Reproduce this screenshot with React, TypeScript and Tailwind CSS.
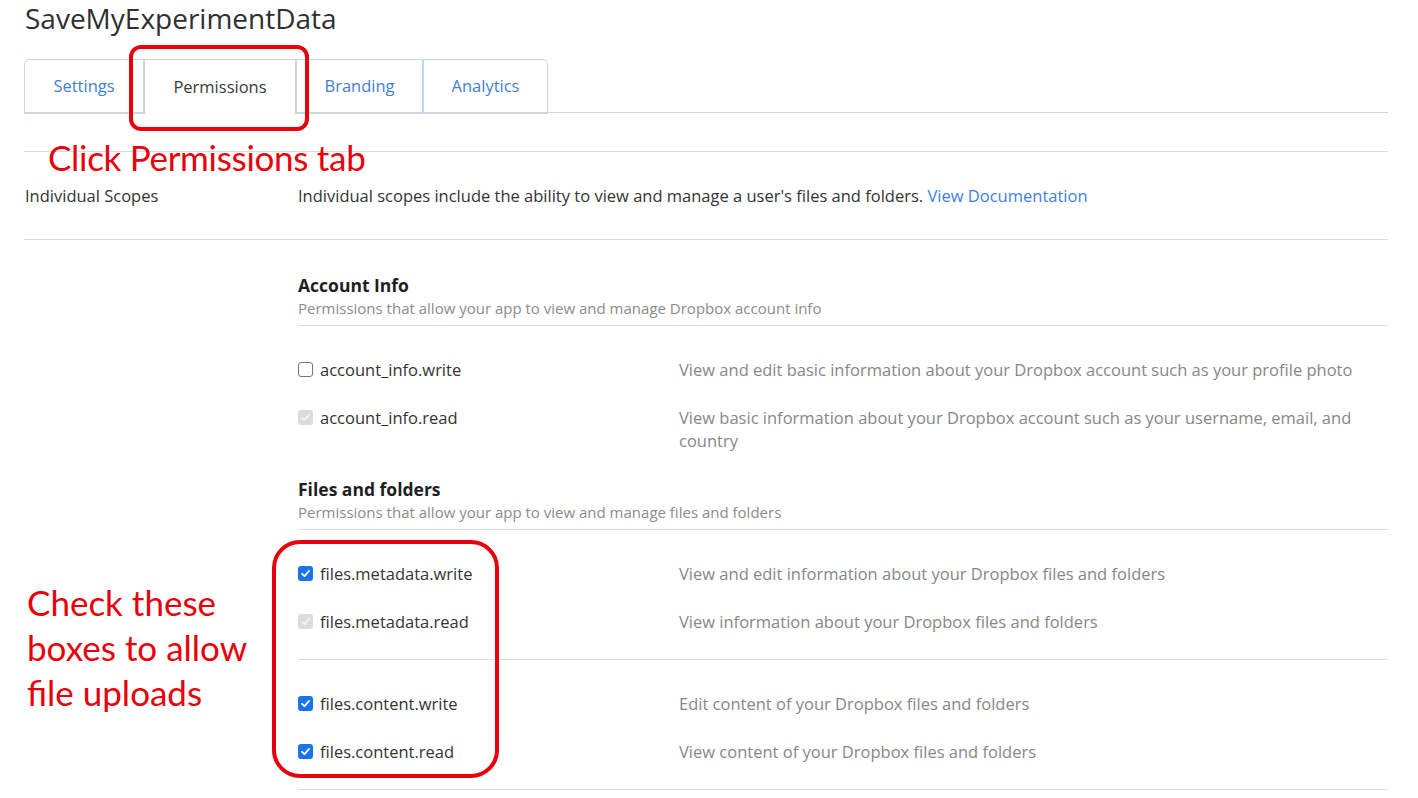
import React from "react";

const RED = "border-[#e8000b]";

type Scope = {
  name: string;
  desc: string;
  state: "off" | "on" | "locked";
};

const ACCOUNT_SCOPES: Scope[] = [
  {
    name: "account_info.write",
    desc: "View and edit basic information about your Dropbox account such as your profile photo",
    state: "off",
  },
  {
    name: "account_info.read",
    desc: "View basic information about your Dropbox account such as your username, email, and country",
    state: "locked",
  },
];

const METADATA_SCOPES: Scope[] = [
  {
    name: "files.metadata.write",
    desc: "View and edit information about your Dropbox files and folders",
    state: "on",
  },
  {
    name: "files.metadata.read",
    desc: "View information about your Dropbox files and folders",
    state: "locked",
  },
];

const CONTENT_SCOPES: Scope[] = [
  {
    name: "files.content.write",
    desc: "Edit content of your Dropbox files and folders",
    state: "on",
  },
  {
    name: "files.content.read",
    desc: "View content of your Dropbox files and folders",
    state: "on",
  },
];

const TABS = [
  { label: "Settings", w: "w-[120px]", cls: "rounded-tl-[5px]" },
  { label: "Permissions", w: "w-[152px]", cls: "", active: true },
  { label: "Branding", w: "w-[127px]", cls: "" },
  { label: "Analytics", w: "w-[125px]", cls: "rounded-tr-[5px]" },
];

function Checkbox({ state }: { state: Scope["state"] }) {
  if (state === "off") {
    return (
      <span className="h-[15px] w-[15px] shrink-0 rounded-[3px] border border-[#767676] bg-white" />
    );
  }
  const on = state === "on";
  return (
    <span
      className={
        "flex h-[15px] w-[15px] shrink-0 items-center justify-center rounded-[3px] " +
        (on ? "bg-[#1a73e8]" : "bg-[#dcdcdc]")
      }
    >
      <svg viewBox="0 0 12 12" className="h-[11px] w-[11px]">
        <path
          d="M2.2 6.3 L4.9 8.9 L9.9 3.2"
          fill="none"
          stroke={on ? "#ffffff" : "#f4f4f4"}
          strokeWidth="1.9"
          strokeLinecap="round"
          strokeLinejoin="round"
        />
      </svg>
    </span>
  );
}

function ScopeRow({ scope }: { scope: Scope }) {
  return (
    <div className="flex py-3 text-[16.5px] leading-[23px]">
      <div className="flex h-[24px] w-[381px] shrink-0 items-center gap-[7px] self-start">
        <Checkbox state={scope.state} />
        <span className="text-[#333]">{scope.name}</span>
      </div>
      <div className="pt-[1px] leading-[23px] text-[#878787]">{scope.desc}</div>
    </div>
  );
}

function RowGroup({ scopes, line = true }: { scopes: Scope[]; line?: boolean }) {
  return (
    <div className={"pt-[19px] " + (line ? "border-b border-[#dcdcdc] pb-[14px]" : "")}>
      {scopes.map((s) => (
        <ScopeRow key={s.name} scope={s} />
      ))}
    </div>
  );
}

function GroupHeading({ title, sub }: { title: string; sub: string }) {
  return (
    <div className="border-b border-[#dcdcdc] pb-[6px]">
      <div className="text-[17.5px] font-bold leading-[24px] text-[#1e1e1e]">{title}</div>
      <div className="text-[15px] leading-[22px] text-[#8c8c8c]">{sub}</div>
    </div>
  );
}

export default function App() {
  return (
    <div className="min-h-[798px] w-full overflow-hidden bg-white pl-[24px] pr-[30px] font-['Open_Sans',sans-serif]">
      <h1 className="pl-px text-[28px] font-normal leading-[36px] text-[#2f2f2f]">
        SaveMyExperimentData
      </h1>

      {/* tabs */}
      <div className="relative mt-[23px] flex h-[54px] border-b border-[#d6d6d6]">
        {TABS.map((t) => (
          <div
            key={t.label}
            className={
              "flex h-[55px] items-center justify-center text-[16.5px] " +
              t.w +
              " " +
              t.cls +
              " " +
              (t.active
                ? "border border-b-0 border-[#cfcfcf] bg-white text-[#3a3a3a]"
                : "border border-[#c2d8ee] text-[#3f7fd2]")
            }
          >
            {t.label}
          </div>
        ))}
        <div
          className={
            "pointer-events-none absolute left-[105px] top-[-14px] h-[86px] w-[180px] rounded-[12px] border-[4px] " +
            RED
          }
        />
      </div>

      {/* annotation + individual scopes */}
      <div className="relative mt-[38px] border-t border-[#dcdcdc]">
        <div className="absolute left-[24px] top-[-13px] font-['Lato',sans-serif] text-[35px] leading-[36px] tracking-[-0.3px] text-[#e8000b]">
          Click Permissions tab
        </div>
        <div className="flex h-[88px] items-center border-b border-[#dcdcdc] text-[16.5px] leading-[24px]">
          <div className="w-[274px] shrink-0 pl-px text-[#333]">Individual Scopes</div>
          <div className="text-[#333]">
            Individual scopes include the ability to view and manage a user's files and folders.{" "}
            <span className="text-[#3d7fe6]">View Documentation</span>
          </div>
        </div>
      </div>

      <div className="relative flex">
        <div className="w-[274px] shrink-0" />
        <div className="flex-1 pt-[33px]">
          <GroupHeading
            title="Account Info"
            sub="Permissions that allow your app to view and manage Dropbox account info"
          />
          <RowGroup scopes={ACCOUNT_SCOPES} line={false} />

          <div className="mt-[13px]">
            <GroupHeading
              title="Files and folders"
              sub="Permissions that allow your app to view and manage files and folders"
            />
          </div>
          <div className="relative">
            <RowGroup scopes={METADATA_SCOPES} />
            <RowGroup scopes={CONTENT_SCOPES} />
            <div
              className={
                "pointer-events-none absolute left-[-26px] top-[10px] h-[238px] w-[227px] rounded-[28px] border-[4px] " +
                RED
              }
            />
          </div>
        </div>

        <div className="absolute left-[3px] top-[340px] font-['Lato',sans-serif] text-[35px] leading-[45px] text-[#e8000b]">
          Check these
          <br />
          boxes to allow
          <br />
          file uploads
        </div>
      </div>
    </div>
  );
}
